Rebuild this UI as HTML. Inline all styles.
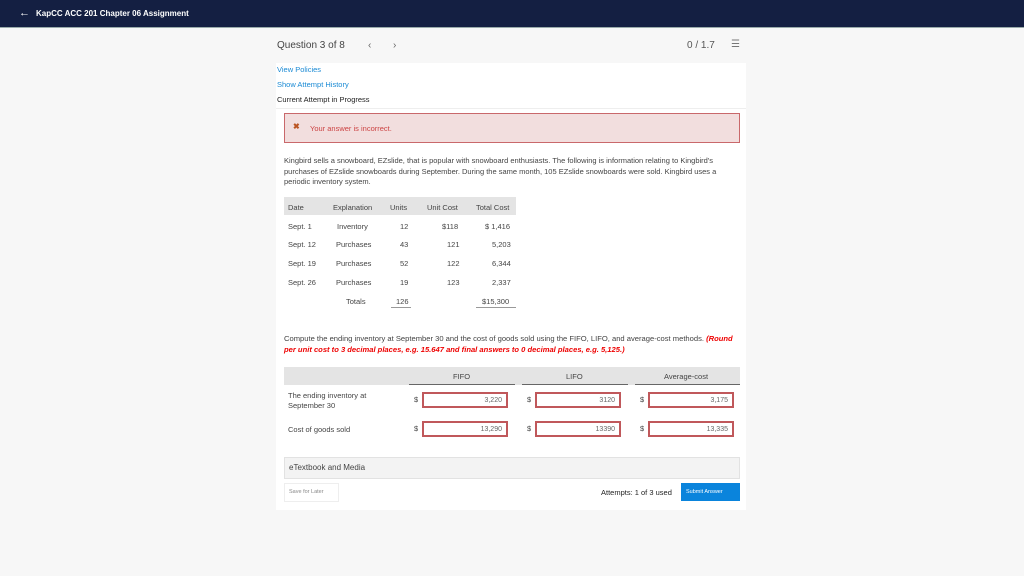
<!DOCTYPE html>
<html><head><style>
*{margin:0;padding:0;box-sizing:border-box}
body{width:1024px;height:576px;background:#f7f7f7;font-family:"Liberation Sans",sans-serif;position:relative;overflow:hidden;color:#333}
.a{position:absolute;white-space:nowrap}
.top{position:absolute;left:0;top:0;width:1024px;height:28px;background:#141f42;border-bottom:1px solid #9aa}
.card{position:absolute;left:276px;top:63px;width:470px;height:447px;background:#fff}
.s{font-size:7.5px;color:#444}
.th{background:#e4e4e4}
.inp{position:absolute;height:16px;border:2px solid #c0585b;background:#fff;font-size:7px;color:#666;text-align:right;padding-right:4px;line-height:13px}
</style></head><body>
<div class="top"></div>
<div class="a" style="left:19px;top:7px;color:#fff;font-size:11px">&#8592;</div>
<div class="a" style="left:36px;top:9px;color:#fff;font-size:8px;font-weight:bold">KapCC ACC 201 Chapter 06 Assignment</div>
<div class="a" style="left:277px;top:40px;font-size:10px;color:#444">Question 3 of 8</div>
<div class="a" style="left:368px;top:40px;font-size:10px;color:#666">&#8249;</div>
<div class="a" style="left:393px;top:40px;font-size:10px;color:#666">&#8250;</div>
<div class="a" style="left:687px;top:40px;font-size:10px;color:#555">0 / 1.7</div>
<div class="a" style="left:731px;top:39px;font-size:10px;color:#777">&#9776;</div>
<div class="card"></div>
<div class="a" style="left:277px;top:65px;font-size:7.5px;color:#1a8ad4">View Policies</div>
<div class="a" style="left:277px;top:80px;font-size:7.5px;color:#1a8ad4">Show Attempt History</div>
<div class="a" style="left:277px;top:95px;font-size:7.5px;color:#222">Current Attempt in Progress</div>
<div class="a" style="left:276px;top:108px;width:470px;height:1px;background:#eee"></div>
<div class="a" style="left:284px;top:113px;width:456px;height:30px;background:#f2dede;border:1px solid #c9686b"></div>
<div class="a" style="left:293px;top:122px;font-size:8px;color:#b52;font-weight:bold">&#10006;</div>
<div class="a" style="left:310px;top:124px;font-size:7.5px;color:#c44">Your answer is incorrect.</div>
<div class="a s" style="left:284px;top:156px;line-height:10.5px;white-space:normal;width:454px">Kingbird sells a snowboard, EZslide, that is popular with snowboard enthusiasts. The following is information relating to Kingbird's purchases of EZslide snowboards during September. During the same month, 105 EZslide snowboards were sold. Kingbird uses a periodic inventory system.</div>
<div class="a th" style="left:284px;top:197px;width:232px;height:18px"></div>
<div class="a s" style="left:288px;top:203px">Date</div>
<div class="a s" style="left:333px;top:203px">Explanation</div>
<div class="a s" style="left:390px;top:203px">Units</div>
<div class="a s" style="left:427px;top:203px">Unit Cost</div>
<div class="a s" style="left:476px;top:203px">Total Cost</div>
<div class="a s" style="left:288px;top:222px">Sept. 1</div><div class="a s" style="left:337px;top:222px">Inventory</div><div class="a s" style="left:400px;top:222px">12</div><div class="a s" style="left:442px;top:222px">$118</div><div class="a s" style="left:485px;top:222px">$ 1,416</div>
<div class="a s" style="left:288px;top:240px">Sept. 12</div><div class="a s" style="left:336px;top:240px">Purchases</div><div class="a s" style="left:400px;top:240px">43</div><div class="a s" style="left:447px;top:240px">121</div><div class="a s" style="left:492px;top:240px">5,203</div>
<div class="a s" style="left:288px;top:259px">Sept. 19</div><div class="a s" style="left:336px;top:259px">Purchases</div><div class="a s" style="left:400px;top:259px">52</div><div class="a s" style="left:447px;top:259px">122</div><div class="a s" style="left:492px;top:259px">6,344</div>
<div class="a s" style="left:288px;top:278px">Sept. 26</div><div class="a s" style="left:336px;top:278px">Purchases</div><div class="a s" style="left:400px;top:278px">19</div><div class="a s" style="left:447px;top:278px">123</div><div class="a s" style="left:492px;top:278px">2,337</div>
<div class="a s" style="left:346px;top:297px">Totals</div><div class="a s" style="left:396px;top:297px">126</div><div class="a s" style="left:482px;top:297px">$15,300</div>
<div class="a" style="left:391px;top:307px;width:20px;height:1px;background:#999"></div>
<div class="a" style="left:476px;top:307px;width:40px;height:1px;background:#999"></div>
<div class="a s" style="left:284px;top:334px;font-size:7.6px">Compute the ending inventory at September 30 and the cost of goods sold using the FIFO, LIFO, and average-cost methods. <b style="color:#e00;font-style:italic">(Round</b></div>
<div class="a" style="left:284px;top:345px;font-size:7.6px;color:#e00;font-weight:bold;font-style:italic">per unit cost to 3 decimal places, e.g. 15.647 and final answers to 0 decimal places, e.g. 5,125.)</div>
<div class="a th" style="left:284px;top:367px;width:456px;height:18px"></div>
<div class="a" style="left:409px;top:384px;width:106px;height:1px;background:#666"></div>
<div class="a" style="left:522px;top:384px;width:106px;height:1px;background:#666"></div>
<div class="a" style="left:635px;top:384px;width:105px;height:1px;background:#666"></div>
<div class="a s" style="left:453px;top:372px">FIFO</div>
<div class="a s" style="left:566px;top:372px">LIFO</div>
<div class="a s" style="left:664px;top:372px">Average-cost</div>
<div class="a s" style="left:288px;top:391px;line-height:10px">The ending inventory at<br>September 30</div>
<div class="a s" style="left:288px;top:425px">Cost of goods sold</div>
<div class="a s" style="left:414px;top:395px">$</div><div class="a s" style="left:527px;top:395px">$</div><div class="a s" style="left:640px;top:395px">$</div>
<div class="a s" style="left:414px;top:424px">$</div><div class="a s" style="left:527px;top:424px">$</div><div class="a s" style="left:640px;top:424px">$</div>
<div class="inp" style="left:422px;top:392px;width:86px">3,220</div>
<div class="inp" style="left:535px;top:392px;width:86px">3120</div>
<div class="inp" style="left:648px;top:392px;width:86px">3,175</div>
<div class="inp" style="left:422px;top:421px;width:86px">13,290</div>
<div class="inp" style="left:535px;top:421px;width:86px">13390</div>
<div class="inp" style="left:648px;top:421px;width:86px">13,335</div>
<div class="a" style="left:284px;top:457px;width:456px;height:22px;background:#f3f3f3;border:1px solid #e2e2e2"></div>
<div class="a" style="left:289px;top:463px;font-size:8px;color:#444">eTextbook and Media</div>
<div class="a" style="left:284px;top:483px;width:55px;height:19px;border:1px solid #eee"></div>
<div class="a" style="left:289px;top:489px;font-size:5.5px;color:#888">Save for Later</div>
<div class="a" style="left:601px;top:488px;font-size:7.5px;color:#222">Attempts: 1 of 3 used</div>
<div class="a" style="left:681px;top:483px;width:59px;height:18px;background:#0a84dc"></div>
<div class="a" style="left:686px;top:489px;font-size:5.5px;color:#fff">Submit Answer</div>
</body></html>
